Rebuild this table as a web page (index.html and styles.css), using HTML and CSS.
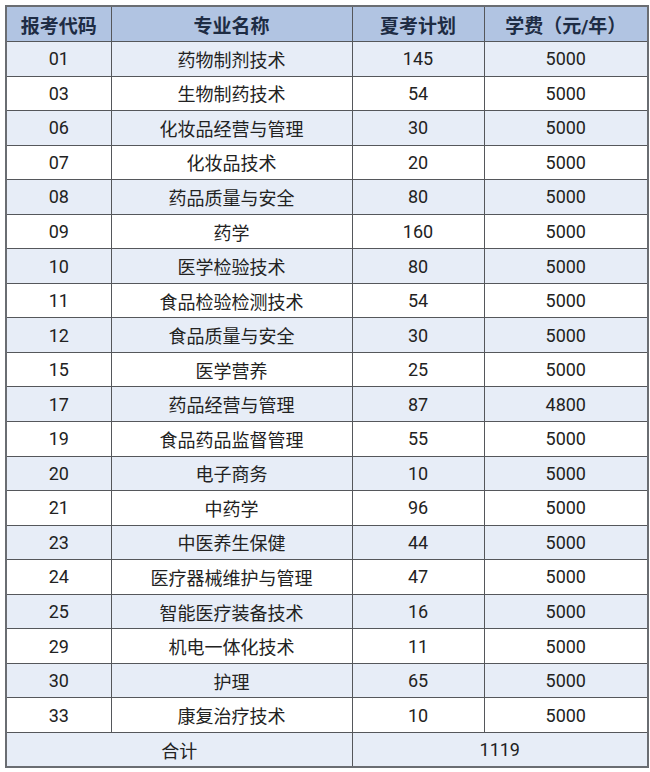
FILE: index.html
```html
<!DOCTYPE html>
<html lang="zh">
<head>
<meta charset="utf-8">
<link rel="stylesheet" href="styles.css">
</head>
<body>
<table class="plan">
  <colgroup>
    <col class="c1"><col class="c2"><col class="c3"><col class="c4">
  </colgroup>
  <thead>
    <tr><th>报考代码</th><th>专业名称</th><th>夏考计划</th><th>学费（元/年）</th></tr>
  </thead>
  <tbody>
    <tr><td>01</td><td>药物制剂技术</td><td>145</td><td>5000</td></tr>
    <tr><td>03</td><td>生物制药技术</td><td>54</td><td>5000</td></tr>
    <tr><td>06</td><td>化妆品经营与管理</td><td>30</td><td>5000</td></tr>
    <tr><td>07</td><td>化妆品技术</td><td>20</td><td>5000</td></tr>
    <tr><td>08</td><td>药品质量与安全</td><td>80</td><td>5000</td></tr>
    <tr><td>09</td><td>药学</td><td>160</td><td>5000</td></tr>
    <tr><td>10</td><td>医学检验技术</td><td>80</td><td>5000</td></tr>
    <tr><td>11</td><td>食品检验检测技术</td><td>54</td><td>5000</td></tr>
    <tr><td>12</td><td>食品质量与安全</td><td>30</td><td>5000</td></tr>
    <tr><td>15</td><td>医学营养</td><td>25</td><td>5000</td></tr>
    <tr><td>17</td><td>药品经营与管理</td><td>87</td><td>4800</td></tr>
    <tr><td>19</td><td>食品药品监督管理</td><td>55</td><td>5000</td></tr>
    <tr><td>20</td><td>电子商务</td><td>10</td><td>5000</td></tr>
    <tr><td>21</td><td>中药学</td><td>96</td><td>5000</td></tr>
    <tr><td>23</td><td>中医养生保健</td><td>44</td><td>5000</td></tr>
    <tr><td>24</td><td>医疗器械维护与管理</td><td>47</td><td>5000</td></tr>
    <tr><td>25</td><td>智能医疗装备技术</td><td>16</td><td>5000</td></tr>
    <tr><td>29</td><td>机电一体化技术</td><td>11</td><td>5000</td></tr>
    <tr><td>30</td><td>护理</td><td>65</td><td>5000</td></tr>
    <tr><td>33</td><td>康复治疗技术</td><td>10</td><td>5000</td></tr>
    <tr class="total"><td colspan="2">合计</td><td colspan="2">1119</td></tr>
  </tbody>
</table>
</body>
</html>
```
FILE: styles.css
```css
html, body {
  margin: 0;
  padding: 0;
  background: #ffffff;
}
body {
  padding: 5px 3px 0 5px;
  font-family: Roboto, "Noto Sans CJK SC", sans-serif;
  color: #222222;
}
.plan {
  border-collapse: collapse;
  table-layout: fixed;
  width: 642px;
  border: 2px solid #6a6d72;
}
.c1 { width: 105px; }
.c2 { width: 241px; }
.c3 { width: 132px; }
.c4 { width: 164px; }
.plan th, .plan td {
  border: 1px solid #55575b;
  text-align: center;
  padding: 0;
  white-space: nowrap;
}
.plan th {
  height: 34px;
  background: #b1c4e2;
  color: #1e2c44;
  font-weight: bold;
  font-size: 19px;
}
.plan td {
  height: 33.55px;
  font-size: 18px;
}
.plan tbody tr:nth-child(odd) td {
  background: #e7edf7;
}
.plan tbody tr:nth-child(even) td {
  background: #ffffff;
}
.plan tr.total td {
  background: #e1e8f4;
}
```
